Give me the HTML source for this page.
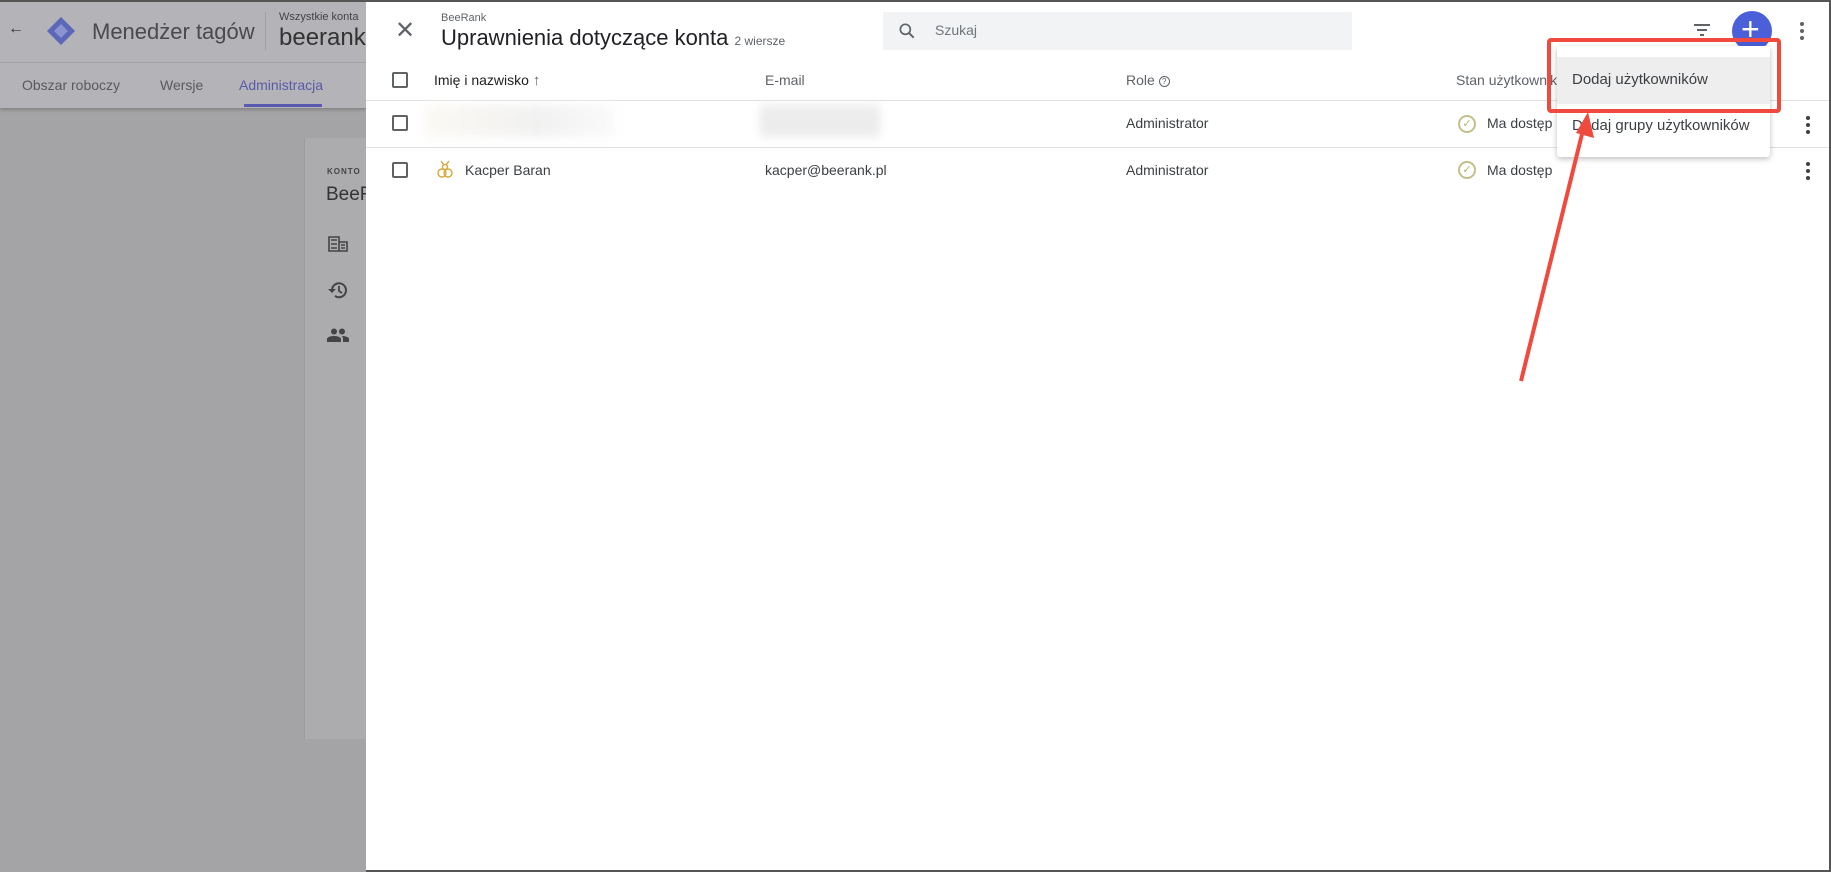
<!DOCTYPE html>
<html><head><meta charset="utf-8"><style>
*{margin:0;padding:0;box-sizing:border-box}
body{width:1831px;height:872px;overflow:hidden;background:#a4a4a6;font-family:"Liberation Sans",Arial,sans-serif;position:relative;color:#3c4043}
.abs{position:absolute}
.cb{position:absolute;width:16px;height:16px;border:2px solid #5f6368;border-radius:2px}
.t{position:absolute;white-space:nowrap}
</style></head><body>
<div class="abs" style="left:0;top:0;width:366px;height:108px;background:#b4b3b7;box-shadow:0 2px 3px rgba(0,0,0,.2)"></div>
<div class="abs" style="left:0;top:0;width:1831px;height:2px;background:#555"></div>
<div class="abs" style="left:0;top:62px;width:366px;height:1px;background:#a2a1a5"></div>
<div class="t" style="left:8px;top:20px;font-size:16px;color:#333">←</div>
<svg class="abs" style="left:46px;top:16px" width="30" height="30" viewBox="0 0 30 30"><path d="M15 1 L29 15 L15 29 L1 15Z" fill="#5b67b8"/><path d="M15 8 L22 15 L15 22 L8 15Z" fill="#8a93cf"/></svg>
<div class="t" style="left:92px;top:19px;font-size:22px;color:#4a4a4e">Menedżer tagów</div>
<div class="abs" style="left:265px;top:12px;width:1px;height:38px;background:#a0a0a4"></div>
<div class="t" style="left:279px;top:11px;font-size:11px;color:#444">Wszystkie konta</div>
<div class="t" style="left:279px;top:24px;font-size:24px;color:#333">beerank.p</div>
<div class="t" style="left:22px;top:77px;font-size:14px;color:#5a5a5e">Obszar roboczy</div>
<div class="t" style="left:160px;top:77px;font-size:14px;color:#5a5a5e">Wersje</div>
<div class="t" style="left:239px;top:77px;font-size:14px;color:#5a5aa8">Administracja</div>
<div class="abs" style="left:244px;top:104px;width:78px;height:3px;background:#5a5ab0"></div>
<div class="abs" style="left:304px;top:138px;width:62px;height:601px;background:#acabae;border-left:1px solid #9c9c9e"></div>
<div class="t" style="left:327px;top:167px;font-size:8px;letter-spacing:1px;color:#444;font-weight:bold">KONTO</div>
<div class="t" style="left:326px;top:184px;font-size:19px;color:#333">BeeR</div>
<svg class="abs" style="left:328px;top:236px" width="20" height="16"><path d="M1 1H11V15H1Z M11 6H19V15H11Z M3 4H9M3 8H9M3 12H9M13 9H17M13 12H17" fill="none" stroke="#444" stroke-width="1.6"/></svg>
<svg class="abs" style="left:327px;top:280px" width="22" height="20" viewBox="0 0 22 20"><path d="M5 10 A7 7 0 1 1 8 16" fill="none" stroke="#444" stroke-width="2"/><path d="M1 9 L5 13 L9 9" fill="#444"/><path d="M12 6V11L15 13" fill="none" stroke="#444" stroke-width="1.8"/></svg>
<svg class="abs" style="left:327px;top:328px" width="22" height="14" viewBox="0 0 22 14"><circle cx="7" cy="3.5" r="3" fill="#444"/><circle cx="15" cy="3.5" r="3" fill="#444"/><path d="M0 14V11C0 9 4 8 7 8S14 9 14 11V14Z M15 8C18 8 22 9 22 11V14H16V11C16 10 15.5 9 15 8Z" fill="#444"/></svg>
<div class="abs" style="left:366px;top:0;width:1465px;height:872px;background:#fff;border-top:2px solid #555;border-right:2px solid #555;border-bottom:2px solid #555"></div>
<div class="t" style="left:395px;top:16px;font-size:24px;color:#5f6368;font-weight:300">✕</div>
<div class="t" style="left:441px;top:12px;font-size:11px;color:#5f6368">BeeRank</div>
<div class="t" style="left:441px;top:25px;font-size:22px;color:#202124">Uprawnienia dotyczące konta <span style="font-size:12px;color:#5f6368">2 wiersze</span></div>
<div class="abs" style="left:883px;top:12px;width:469px;height:38px;background:#f1f3f4;border-radius:2px"></div>
<svg class="abs" style="left:897px;top:21px" width="20" height="20" viewBox="0 0 24 24"><circle cx="10" cy="10" r="6" fill="none" stroke="#5f6368" stroke-width="2"/><path d="M14.5 14.5 L20 20" stroke="#5f6368" stroke-width="2.4"/></svg>
<div class="t" style="left:935px;top:22px;font-size:14px;color:#70757a">Szukaj</div>
<svg class="abs" style="left:1692px;top:22px" width="20" height="16" viewBox="0 0 20 16"><path d="M2 3H18M5 8H15M8 13H12" stroke="#5f6368" stroke-width="2"/></svg>
<div class="abs" style="left:1732px;top:11px;width:40px;height:40px;border-radius:50%;background:#4a5fd8"></div>
<div class="t" style="left:1741px;top:9px;font-size:32px;color:#fff;line-height:40px">+</div>
<svg class="abs" style="left:1798px;top:20px" width="8" height="22"><circle cx="4" cy="4" r="2" fill="#5f6368"/><circle cx="4" cy="11" r="2" fill="#5f6368"/><circle cx="4" cy="18" r="2" fill="#5f6368"/></svg>
<div class="cb" style="left:392px;top:72px"></div>
<div class="t" style="left:434px;top:72px;font-size:14px;color:#202124">Imię i nazwisko <span style="font-size:15px;color:#5f6368">↑</span></div>
<div class="t" style="left:765px;top:72px;font-size:14px;color:#5f6368">E-mail</div>
<div class="t" style="left:1126px;top:72px;font-size:14px;color:#5f6368">Role <span style="display:inline-block;width:11px;height:11px;border:1.3px solid #5f6368;border-radius:50%;font-size:8px;text-align:center;line-height:9px;vertical-align:1px">?</span></div>
<div class="t" style="left:1456px;top:72px;font-size:14px;color:#5f6368">Stan użytkownika</div>
<div class="abs" style="left:366px;top:100px;width:1463px;height:1px;background:#e0e0e0"></div>
<div class="abs" style="left:366px;top:147px;width:1463px;height:1px;background:#e0e0e0"></div>
<div class="cb" style="left:392px;top:115px"></div>
<div class="abs" style="left:425px;top:105px;width:190px;height:32px;background:linear-gradient(90deg,#fbf9f4,#f1f1f1 60%,#fafafa);filter:blur(5px)"></div>
<div class="abs" style="left:760px;top:105px;width:120px;height:32px;background:#ececec;filter:blur(5px)"></div>
<div class="t" style="left:1126px;top:115px;font-size:14px">Administrator</div>
<div class="abs" style="left:1458px;top:115px;width:18px;height:18px;border:2px solid #c3c08a;border-radius:50%;color:#b8b56d;font-size:11px;text-align:center;line-height:14px">✓</div>
<div class="t" style="left:1487px;top:115px;font-size:14px">Ma dostęp</div>
<svg class="abs" style="left:1804px;top:114px" width="8" height="22"><circle cx="4" cy="4" r="2" fill="#3c4043"/><circle cx="4" cy="11" r="2" fill="#3c4043"/><circle cx="4" cy="18" r="2" fill="#3c4043"/></svg>
<div class="cb" style="left:392px;top:162px"></div>
<svg class="abs" style="left:436px;top:160px" width="18" height="20" viewBox="0 0 18 20"><path d="M5 1 L8 5 M13 1 L10 5" stroke="#d8a83a" stroke-width="1.4"/><circle cx="9" cy="7" r="2.5" fill="none" stroke="#d8a83a" stroke-width="1.4"/><circle cx="6" cy="13" r="4" fill="none" stroke="#d8a83a" stroke-width="1.4"/><circle cx="12" cy="13" r="4" fill="none" stroke="#d8a83a" stroke-width="1.4"/></svg>
<div class="t" style="left:465px;top:162px;font-size:14px">Kacper Baran</div>
<div class="t" style="left:765px;top:162px;font-size:14px">kacper@beerank.pl</div>
<div class="t" style="left:1126px;top:162px;font-size:14px">Administrator</div>
<div class="abs" style="left:1458px;top:161px;width:18px;height:18px;border:2px solid #c3c08a;border-radius:50%;color:#b8b56d;font-size:11px;text-align:center;line-height:14px">✓</div>
<div class="t" style="left:1487px;top:162px;font-size:14px">Ma dostęp</div>
<svg class="abs" style="left:1804px;top:160px" width="8" height="22"><circle cx="4" cy="4" r="2" fill="#3c4043"/><circle cx="4" cy="11" r="2" fill="#3c4043"/><circle cx="4" cy="18" r="2" fill="#3c4043"/></svg>
<div class="abs" style="left:1557px;top:46px;width:213px;height:111px;background:#fff;border-radius:3px;box-shadow:0 2px 6px rgba(0,0,0,.25)"></div>
<div class="abs" style="left:1557px;top:57px;width:213px;height:47px;background:#eeeeef"></div>
<div class="t" style="left:1572px;top:71px;font-size:15px;color:#3c4043">Dodaj użytkowników</div>
<div class="t" style="left:1572px;top:117px;font-size:15px;color:#3c4043">Dodaj grupy użytkowników</div>
<div class="abs" style="left:1547px;top:38px;width:234px;height:75px;border:4px solid #f04a3e;border-radius:4px"></div>
<svg class="abs" style="left:0;top:0" width="1831" height="872"><line x1="1521" y1="381" x2="1583" y2="130" stroke="#f04a3e" stroke-width="4"/><path d="M1588 112 L1594 138 L1576 133Z" fill="#f04a3e"/></svg>
</body></html>
